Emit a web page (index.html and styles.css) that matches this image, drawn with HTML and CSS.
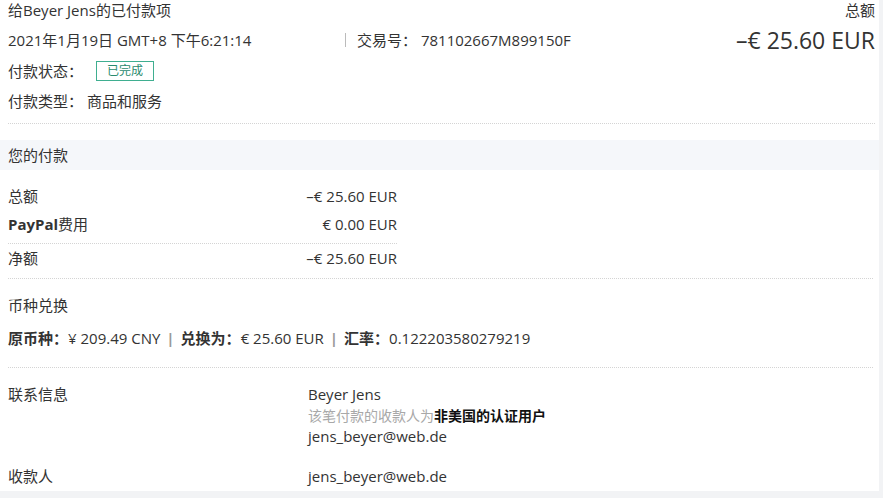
FILE: index.html
```html
<!DOCTYPE html>
<html lang="zh-CN">
<head>
<meta charset="utf-8">
<title>已付款项</title>
<link rel="stylesheet" href="styles.css">
</head>
<body>
<div class="card">
  <div class="summary">
    <div class="sum-left">
      <div class="title">给Beyer Jens的已付款项</div>
      <div class="meta">
        <span class="date">2021年1月19日 GMT+8 下午6:21:14</span>
        <span class="txn"><span class="vbar"></span>交易号： 781102667M899150F</span>
      </div>
      <div class="status">付款状态：<span class="badge">已完成</span></div>
      <div class="type">付款类型： 商品和服务</div>
    </div>
    <div class="sum-right">
      <div class="total-label">总额</div>
      <div class="big">–€ 25.60 EUR</div>
    </div>
  </div>

  <div class="band">您的付款</div>

  <div class="pay">
    <div class="pay-row first"><span>总额</span><span>–€ 25.60 EUR</span></div>
    <div class="pay-row fee"><span><b>PayPal</b>费用</span><span>€ 0.00 EUR</span></div>
    <div class="pay-row net"><span>净额</span><span>–€ 25.60 EUR</span></div>
  </div>

  <div class="conv">
    <div class="conv-title">币种兑换</div>
    <div class="conv-line"><b>原币种：</b>¥ 209.49 CNY<span class="sep">|</span><b>兑换为：</b>€ 25.60 EUR<span class="sep">|</span><b>汇率：</b>0.122203580279219</div>
  </div>

  <div class="info">
    <div class="info-row contact">
      <div class="info-label">联系信息</div>
      <div class="info-value">
        <div>Beyer Jens</div>
        <div class="note">该笔付款的收款人为<b>非美国的认证用户</b></div>
        <div>jens_beyer@web.de</div>
      </div>
    </div>
    <div class="info-row payee">
      <div class="info-label">收款人</div>
      <div class="info-value"><div>jens_beyer@web.de</div></div>
    </div>
  </div>
</div>
</body>
</html>
```

FILE: styles.css
```css
html, body {
  margin: 0;
  padding: 0;
}
body {
  background: #f2f3f5;
  font-family: "Open Sans", "Noto Sans CJK SC", sans-serif;
  font-size: 15px;
  color: #333;
  width: 883px;
  height: 498px;
  overflow: hidden;
}
.card {
  width: 879px;
  height: 491px;
  background: #fff;
  box-sizing: border-box;
}
.summary {
  display: flex;
  justify-content: space-between;
  margin: 0 4px 0 8px;
  padding-bottom: 12px;
  border-bottom: 1px dotted #d4d4d4;
}
.sum-left {
  flex: 1;
}
.title {
  line-height: 20px;
}
.meta {
  margin-top: 10px;
  line-height: 20px;
  display: flex;
}
.date {
  width: 337px;
}
.txn {
  display: inline-flex;
  align-items: center;
}
.vbar {
  display: inline-block;
  width: 1px;
  height: 14px;
  background: #bbb;
  margin-right: 11px;
}
.status {
  margin-top: 11px;
  line-height: 20px;
  display: flex;
  align-items: center;
}
.badge {
  display: inline-block;
  margin-left: 13px;
  border: 1px solid #3fae90;
  color: #2a8a6e;
  font-size: 12px;
  line-height: 18px;
  padding: 0 10px;
}
.type {
  margin-top: 10px;
  line-height: 20px;
}
.sum-right {
  text-align: right;
}
.total-label {
  line-height: 20px;
}
.big {
  margin-top: 5px;
  font-size: 23px;
  line-height: 30px;
}
.band {
  margin-top: 16px;
  background: #f5f7fa;
  height: 30px;
  line-height: 30px;
  padding-left: 8px;
}
.pay {
  margin: 0 6px 0 8px;
  padding-bottom: 10px;
  border-bottom: 1px dotted #d4d4d4;
}
.pay-row {
  width: 389px;
  display: flex;
  justify-content: space-between;
  line-height: 20px;
}
.pay-row b {
  font-weight: 700;
}
.pay-row.first {
  margin-top: 16px;
}
.pay-row.fee {
  margin-top: 8px;
  padding-bottom: 9px;
  border-bottom: 1px dotted #d4d4d4;
}
.pay-row.net {
  margin-top: 4px;
}
.conv {
  margin: 0 6px 0 8px;
  padding-bottom: 19px;
  border-bottom: 1px dotted #d4d4d4;
}
.conv-title {
  margin-top: 16px;
  line-height: 20px;
}
.conv-line {
  margin-top: 13px;
  line-height: 20px;
}
.conv-line b {
  font-weight: 700;
}
.conv-line .sep {
  color: #999;
  font-weight: 700;
  margin: 0 6px;
}
.info {
  margin: 0 6px 0 8px;
}
.info-row {
  display: flex;
}
.info-label {
  width: 300px;
  line-height: 21px;
}
.info-value {
  line-height: 21px;
}
.info-row.contact {
  margin-top: 16px;
}
.info-row.payee {
  margin-top: 19px;
}
.note {
  color: #a8a8a8;
  font-size: 14px;
}
.note b {
  color: #111;
  font-weight: 700;
}
```
